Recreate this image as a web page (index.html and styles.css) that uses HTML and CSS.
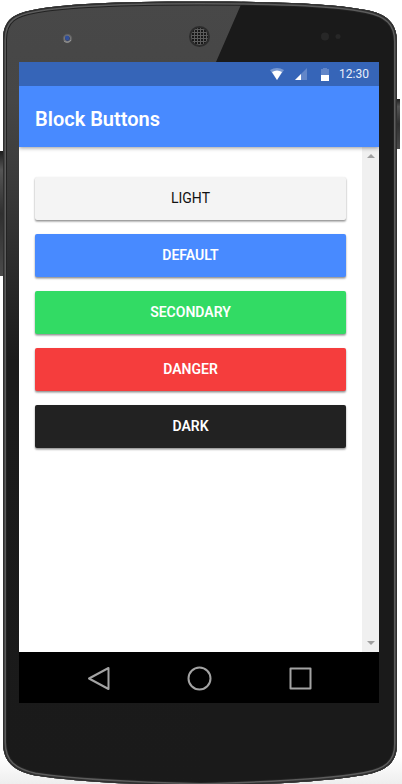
FILE: index.html
```html
<!DOCTYPE html>
<html lang="en">
<head>
<meta charset="utf-8">
<meta name="viewport" content="width=device-width, initial-scale=1">
<title>Block Buttons</title>
<link rel="stylesheet" href="styles.css">
</head>
<body>
<div class="phone">
  <svg class="phone-body" viewBox="0 0 402 784" preserveAspectRatio="none" aria-hidden="true">
    <defs>
      <linearGradient id="shell" x1="0" y1="0" x2="0" y2="1">
        <stop offset="0" stop-color="#484848"/>
        <stop offset=".13" stop-color="#464646"/>
        <stop offset=".25" stop-color="#383838"/>
        <stop offset=".46" stop-color="#1b1b1b"/>
        <stop offset="1" stop-color="#1a1a1a"/>
      </linearGradient>
      <linearGradient id="key" x1="0" y1="0" x2="0" y2="1">
        <stop offset="0" stop-color="#1c1c1c"/>
        <stop offset=".15" stop-color="#555"/>
        <stop offset=".5" stop-color="#303030"/>
        <stop offset="1" stop-color="#4a4a4a"/>
      </linearGradient>
      <radialGradient id="lens">
        <stop offset="0" stop-color="#3c66c4"/>
        <stop offset=".4" stop-color="#38456c"/>
        <stop offset=".6" stop-color="#777"/>
        <stop offset="1" stop-color="#4c4c4c"/>
      </radialGradient>
      <linearGradient id="floor" x1="0" y1="0" x2="0" y2="1">
        <stop offset="0" stop-color="#fff"/>
        <stop offset="1" stop-color="#eee"/>
      </linearGradient>
      <pattern id="mesh" width="3" height="3" patternUnits="userSpaceOnUse">
        <rect width="3" height="3" fill="#5c5c5c"/>
        <rect width="2" height="2" fill="#181818"/>
      </pattern>
      <path id="edge" d="M3 40C3 18 16 13 35 9.500C65 4 110 1.500 200 1.500S335 4 366 10C387 14 397 23 397 42V744C397 763 386 771 364 775C335 780 290 784 200 786C110 784 65 780 35 775.500C15 771 3 763 3 742Z"/>
      <clipPath id="outline"><use href="#edge"/></clipPath>
    </defs>
    <path d="M0 756H402V784H0Z" fill="url(#floor)"/>
    <rect x="0" y="151" width="5" height="125" fill="url(#key)"/>
    <rect x="395" y="99" width="5" height="50" fill="url(#key)"/>
    <g clip-path="url(#outline)">
      <rect width="402" height="784" fill="url(#shell)"/>
      <path d="M243 0H402V784H200V62H216Z" fill="#1a1a1a"/>
      <use href="#edge" fill="none" stroke="#222" stroke-width="8"/>
      <use href="#edge" fill="none" stroke="#5c5c5c" stroke-width="6"/>
      <use href="#edge" fill="none" stroke="#303030" stroke-width="3"/>
    </g>
    <circle cx="67.500" cy="38.500" r="5" fill="url(#lens)"/>
    <circle cx="67" cy="37.500" r="2" fill="#304f9c"/>
    <path d="M64 41Q68 44 71 40" fill="none" stroke="#999"/>
    <circle cx="199.500" cy="36.500" r="9.500" fill="url(#mesh)" stroke="#2c2c2c" stroke-width="2"/>
    <circle cx="325" cy="36.500" r="4" fill="#272727"/>
    <circle cx="338" cy="36.500" r="2.500" fill="#272727"/>
  </svg>

  <main class="screen">
    <div class="status-bar">
      <svg class="status-icon wifi" viewBox="0 0 14 12" aria-hidden="true">
        <path d="M0 2Q7-2 14 2L7 12Z" fill="#7898d0"/>
        <path d="M2 4Q7 1 12 4L7 12Z" fill="#fff"/>
      </svg>
      <svg class="status-icon signal" viewBox="0 0 12 12" aria-hidden="true">
        <path d="M0 12L12 0V12Z" fill="#6286c8"/>
        <path d="M0 12L6 6V12Z" fill="#fff"/>
      </svg>
      <svg class="status-icon battery" viewBox="0 0 8 13" aria-hidden="true">
        <path d="M0 1H2V0H6V1H8V7H0Z" fill="#6286c8"/>
        <path d="M0 7H8V13H0Z" fill="#fff"/>
      </svg>
      <time class="clock">12:30</time>
    </div>
    <header class="toolbar"><h1 class="title">Block Buttons</h1></header>
    <div class="content">
      <div class="button-list">
        <button type="button" class="block-button light">LIGHT</button>
        <button type="button" class="block-button default">DEFAULT</button>
        <button type="button" class="block-button secondary">SECONDARY</button>
        <button type="button" class="block-button danger">DANGER</button>
        <button type="button" class="block-button dark">DARK</button>
      </div>
      <div class="scroll-track" aria-hidden="true">
        <svg class="arrow" viewBox="0 0 8 4"><path d="M4 0L8 4H0Z"/></svg>
        <svg class="arrow" viewBox="0 0 8 4"><path d="M0 0H8L4 4Z"/></svg>
      </div>
    </div>
    <nav class="system-nav">
      <button type="button" class="nav-button" aria-label="Back">
        <svg viewBox="0 0 24 24"><path d="M22.500 2V23L3 12.500Z"/></svg>
      </button>
      <button type="button" class="nav-button" aria-label="Home">
        <svg viewBox="0 0 24 24"><circle cx="12.500" cy="12.500" r="11"/></svg>
      </button>
      <button type="button" class="nav-button" aria-label="Recent apps">
        <svg viewBox="0 0 24 24"><path d="M2.500 2.500H22.500V22.500H2.500Z"/></svg>
      </button>
    </nav>
  </main>
</div>
</body>
</html>
```
FILE: styles.css
```css
* {
  box-sizing: border-box;
}

body {
  margin: 0;
  background: #fff;
  font-family: Roboto, "Liberation Sans", sans-serif;
}

.phone {
  position: relative;
  display: flex;
  min-height: 100vh;
  padding: 62px 23px 81px 19px;
}

.phone-body {
  position: absolute;
  inset: 0;
  width: 100%;
  height: 100%;
}

.screen {
  position: relative;
  flex: 1;
  display: flex;
  flex-direction: column;
  overflow: hidden;
  background: #fff;
}

.status-bar {
  position: relative;
  z-index: 1;
  display: flex;
  align-items: center;
  justify-content: flex-end;
  height: 24px;
  padding-right: 10px;
  background: #3665b8;
  color: #e6edf9;
}

.status-icon {
  height: 12px;
}

.wifi {
  width: 14px;
  margin-right: 11px;
}

.signal {
  width: 12px;
  margin-right: 14px;
}

.battery {
  width: 8px;
  height: 13px;
  margin-right: 10px;
}

.clock {
  font-size: 12px;
  line-height: 24px;
}

.toolbar {
  position: relative;
  display: flex;
  align-items: center;
  height: 61px;
  padding: 4px 16px 0;
  background: #488aff;
  box-shadow: 0 1px 4px rgba(0, 0, 0, 0.4);
}

.title {
  margin: 0;
  color: #fff;
  font-size: 20px;
  font-weight: 600;
  line-height: 24px;
}

.content {
  flex: 1;
  display: flex;
}

.button-list {
  flex: 1;
  display: flex;
  flex-direction: column;
  gap: 14px;
  padding: 30px 16px;
}

.block-button {
  height: 43px;
  padding: 0 0 2px;
  border: 0;
  border-radius: 2px;
  box-shadow: 0 2px 2px rgba(0, 0, 0, 0.2), 0 1px 2px rgba(0, 0, 0, 0.3);
  color: #fff;
  font-family: inherit;
  font-size: 14px;
  font-weight: 600;
}

.light {
  background: #f4f4f4;
  color: #111;
  font-weight: 400;
}

.default {
  background: #488aff;
}

.secondary {
  background: #32db64;
}

.danger {
  background: #f53d3d;
}

.dark {
  background: #222;
}

.scroll-track {
  display: flex;
  flex-direction: column;
  align-items: center;
  justify-content: space-between;
  width: 17px;
  padding: 7px 0;
  background: #f0f0f0;
}

.arrow {
  width: 8px;
  height: 4px;
  fill: #a0a0a0;
}

.system-nav {
  display: flex;
  align-items: center;
  justify-content: center;
  gap: 77px;
  height: 51px;
  background: #000;
}

.nav-button {
  width: 24px;
  height: 24px;
  padding: 0;
  border: 0;
  background: none;
}

.nav-button svg {
  display: block;
  overflow: visible;
  fill: none;
  stroke: #a3a3a3;
  stroke-width: 2;
  stroke-linejoin: round;
}
```
